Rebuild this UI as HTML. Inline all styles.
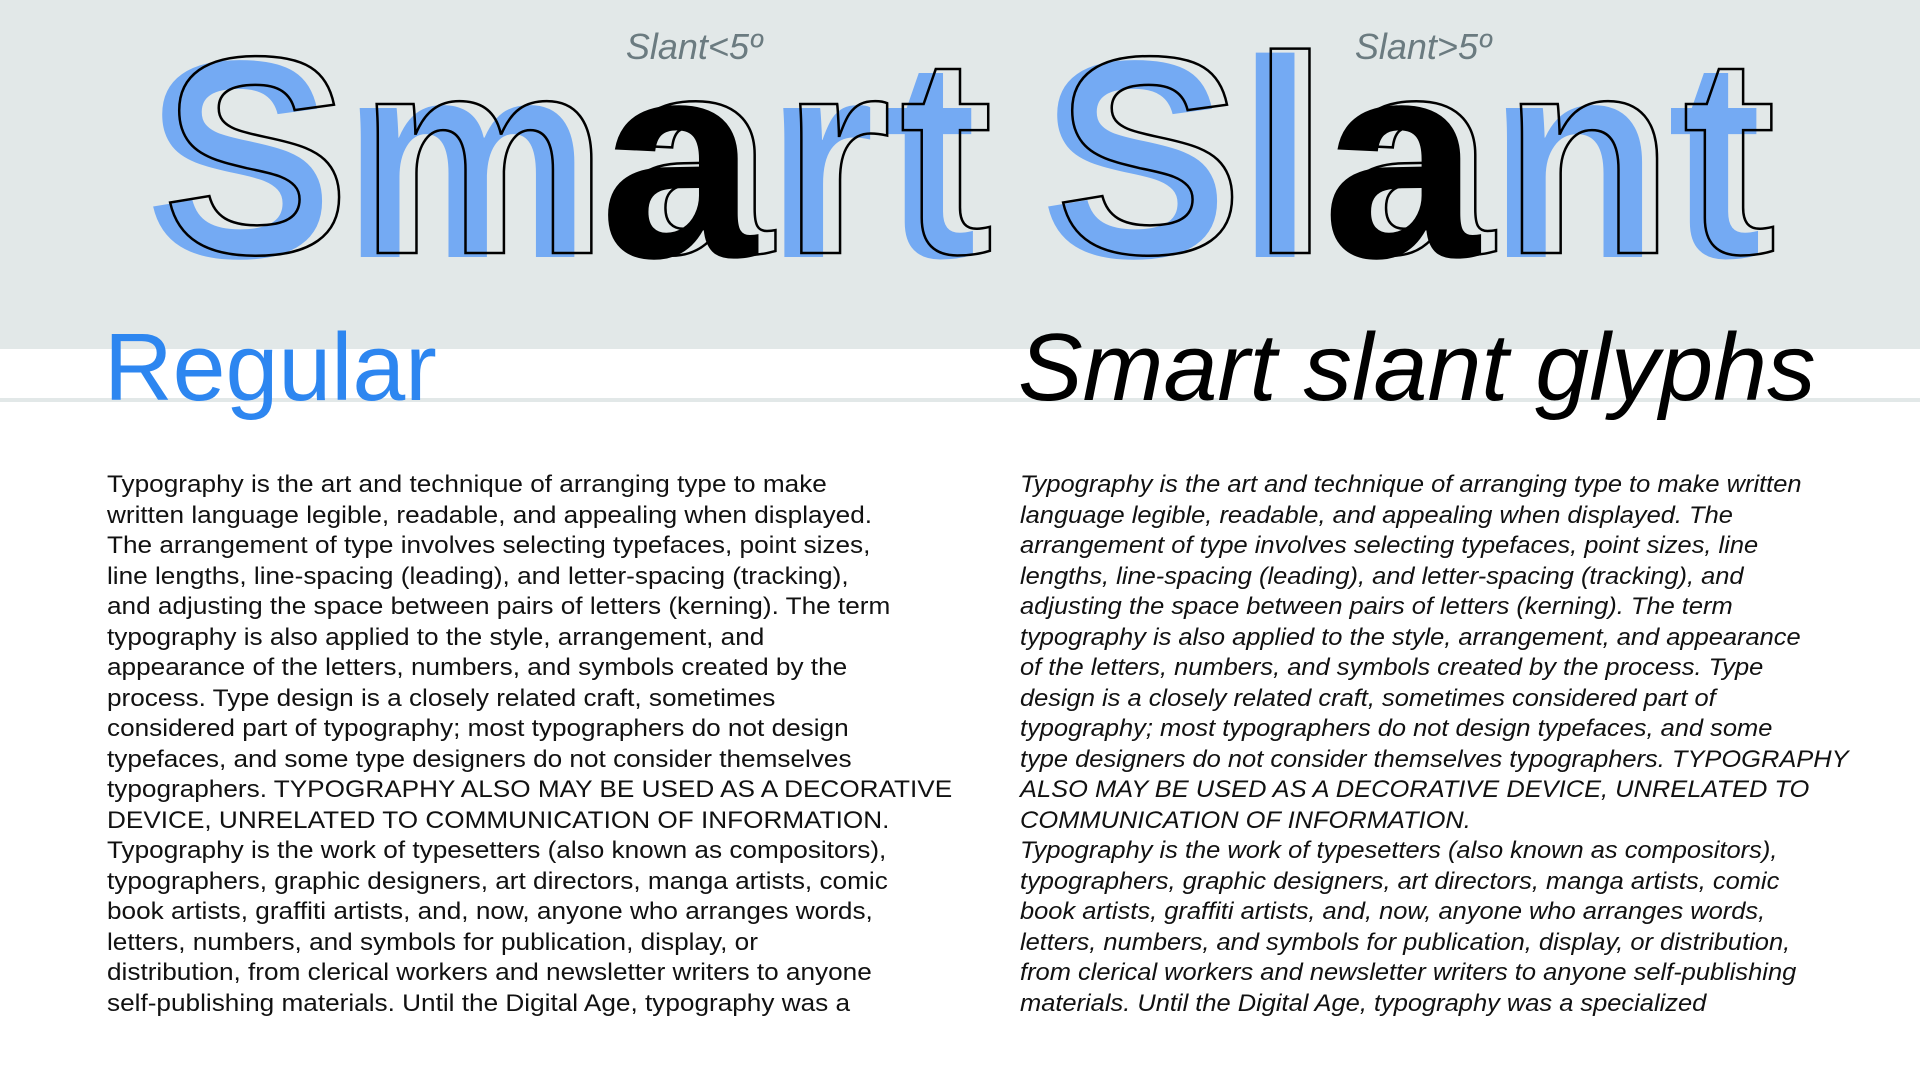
<!DOCTYPE html>
<html><head><meta charset="utf-8"><style>
html,body{margin:0;padding:0;width:1920px;height:1080px;overflow:hidden;background:#fff;font-family:"Liberation Sans",sans-serif}
.band{position:absolute;left:0;top:0;width:1920px;height:349px;background:#e2e8e8}
.rule{position:absolute;left:0;top:398px;width:1920px;height:4px;background:#e2e8e8}
.lab{position:absolute;top:26px;font-size:36px;font-style:italic;color:#6b7b80;transform:translateX(-50%)}
.big{position:absolute;top:19px;font-size:282px;font-weight:bold;white-space:nowrap;line-height:1;letter-spacing:8px}
.fill{color:#74aaf3}
.fill b{color:#000}
.line{-webkit-text-stroke:2.5px #000;color:transparent}
.h{position:absolute;top:320px;font-size:96px;line-height:1;white-space:nowrap;transform-origin:left top}
.txt{position:absolute;top:470px;font-size:24px;line-height:30.5px;white-space:pre;color:#111;transform-origin:left top}
</style></head><body>
<div class="band"></div>
<div class="rule"></div>
<div class="lab" style="left:694px">Slant&lt;5º</div>
<div class="lab" style="left:1423px">Slant&gt;5º</div>
<div class="big fill" style="left:145px">Sm<b>a</b>rt</div>
<div class="big line" style="left:162px;top:15px">Smart</div>
<div class="big fill" style="left:1040px">Sl<b>a</b>nt</div>
<div class="big line" style="left:1055px;top:15px">Slant</div>
<div class="h" style="left:104px;color:#2d86f0;transform:scaleX(0.99)">Regular</div>
<div class="h" style="left:1018px;color:#000;font-style:italic;transform:scaleX(1.01)">Smart slant glyphs</div>
<div class="txt" style="left:107px;transform:scaleX(1.09)">Typography is the art and technique of arranging type to make
written language legible, readable, and appealing when displayed.
The arrangement of type involves selecting typefaces, point sizes,
line lengths, line-spacing (leading), and letter-spacing (tracking),
and adjusting the space between pairs of letters (kerning). The term
typography is also applied to the style, arrangement, and
appearance of the letters, numbers, and symbols created by the
process. Type design is a closely related craft, sometimes
considered part of typography; most typographers do not design
typefaces, and some type designers do not consider themselves
typographers. TYPOGRAPHY ALSO MAY BE USED AS A DECORATIVE
DEVICE, UNRELATED TO COMMUNICATION OF INFORMATION.
Typography is the work of typesetters (also known as compositors),
typographers, graphic designers, art directors, manga artists, comic
book artists, graffiti artists, and, now, anyone who arranges words,
letters, numbers, and symbols for publication, display, or
distribution, from clerical workers and newsletter writers to anyone
self-publishing materials. Until the Digital Age, typography was a</div>
<div class="txt" style="left:1020px;font-style:italic;transform:scaleX(1.06)">Typography is the art and technique of arranging type to make written
language legible, readable, and appealing when displayed. The
arrangement of type involves selecting typefaces, point sizes, line
lengths, line-spacing (leading), and letter-spacing (tracking), and
adjusting the space between pairs of letters (kerning). The term
typography is also applied to the style, arrangement, and appearance
of the letters, numbers, and symbols created by the process. Type
design is a closely related craft, sometimes considered part of
typography; most typographers do not design typefaces, and some
type designers do not consider themselves typographers. TYPOGRAPHY
ALSO MAY BE USED AS A DECORATIVE DEVICE, UNRELATED TO
COMMUNICATION OF INFORMATION.
Typography is the work of typesetters (also known as compositors),
typographers, graphic designers, art directors, manga artists, comic
book artists, graffiti artists, and, now, anyone who arranges words,
letters, numbers, and symbols for publication, display, or distribution,
from clerical workers and newsletter writers to anyone self-publishing
materials. Until the Digital Age, typography was a specialized</div>
</body></html>
